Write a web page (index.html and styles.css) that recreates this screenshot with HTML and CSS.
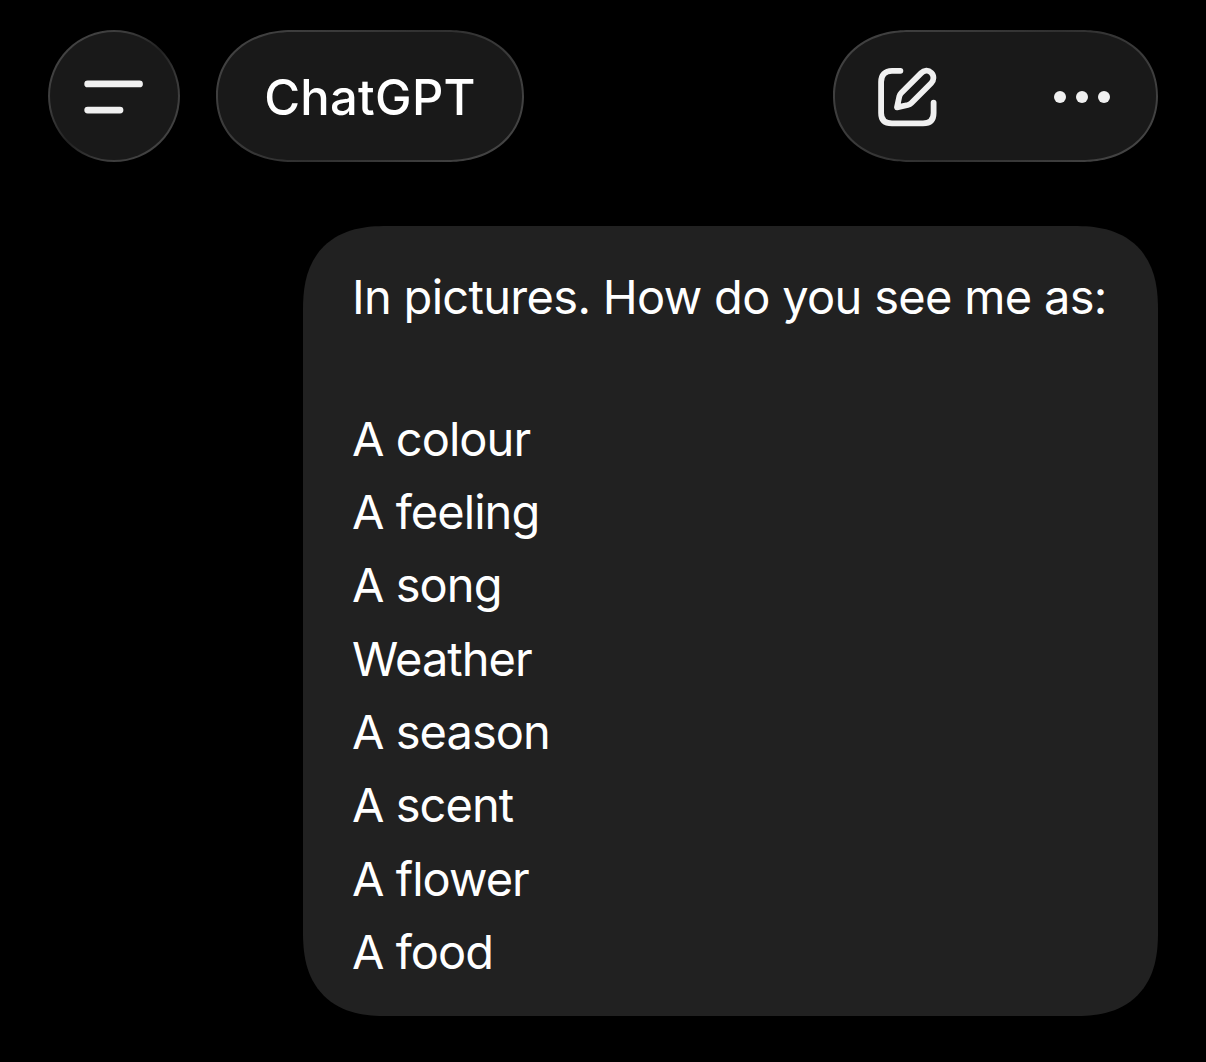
FILE: index.html
```html
<!DOCTYPE html>
<html lang="en">
<head>
    <meta charset="UTF-8">
    <meta name="viewport" content="width=device-width, initial-scale=1.0">
    <title>ChatGPT</title>
    <link rel="stylesheet" href="styles.css">
</head>
<body>
    <header class="top-bar">
        <button class="glass menu-button" aria-label="Menu">
            <svg width="60" height="36" viewBox="0 0 60 36" fill="none" stroke="#f0f0f0" stroke-width="6.8" stroke-linecap="round">
                <path d="M3.7 4.9H55.5M3.7 31.1H36"/>
            </svg>
        </button>
        <button class="glass title-button"><span>ChatGPT</span></button>
        <div class="glass actions">
            <button class="icon-button" aria-label="New chat">
                <svg width="60" height="60" viewBox="0 0 60 60" fill="none" stroke="#f0f0f0" stroke-width="5.8" stroke-linecap="round" stroke-linejoin="round">
                    <path d="M23.4 3.8H15C8 3.8 4.1 8 4.1 15V46C4.1 53 8 56.4 15 56.4H46C53 56.4 56.6 53 56.6 46V35.6"/>
                    <path d="M20 40.3L22.3 29.5Q22.8 27.4 24.2 26L44.1 6.1C47.1 3.1 51.4 2.8 54.3 5.7S57.1 13.3 54.1 16.3L34.4 36Q32.9 37.5 30.8 38Z"/>
                </svg>
            </button>
            <button class="icon-button" aria-label="More">
                <svg width="56" height="12" viewBox="0 0 56 12" fill="#f0f0f0">
                    <circle cx="6" cy="6" r="6"/>
                    <circle cx="28" cy="6" r="6"/>
                    <circle cx="50" cy="6" r="6"/>
                </svg>
            </button>
        </div>
    </header>

    <main class="chat">
        <div class="message">
            <p class="intro">In pictures. How do you see me as:</p>
            <ul class="prompts">
                <li>A colour</li>
                <li>A feeling</li>
                <li>A song</li>
                <li>Weather</li>
                <li>A season</li>
                <li>A scent</li>
                <li>A flower</li>
                <li>A food</li>
            </ul>
        </div>
    </main>
</body>
</html>
```
FILE: styles.css
```css
* { box-sizing: border-box; }
body {
    margin: 0;
    min-height: 1062px;
    background: #000;
    color: #fff;
    font-family: Inter, "Liberation Sans", sans-serif;
}
button {
    padding: 0;
    border: none;
    background: none;
    color: inherit;
    font-family: inherit;
}
.top-bar {
    display: flex;
    padding: 30px 48px 0;
}
/* dark fill with a rim that is brighter top left and bottom right */
.glass {
    display: flex;
    align-items: center;
    height: 132px;
    padding-top: 2px;
    border: 2px solid transparent;
    border-radius: 76px / 66px;
    corner-shape: superellipse(1.1);
    background:
        linear-gradient(#191919, #191919) padding-box,
        linear-gradient(135deg, #444 0%, #393939 30%, #303030 50%, #393939 70%, #484848 100%) border-box;
}
.menu-button {
    width: 132px;
    border-radius: 50%;
    corner-shape: round;
    justify-content: center;
    background:
        linear-gradient(#191919, #191919) padding-box,
        linear-gradient(135deg, #484848 0%, #3c3c3c 30%, #222 50%, #3c3c3c 70%, #484848 100%) border-box;
}
.title-button {
    width: 308px;
    margin-left: 36px;
    justify-content: center;
    font-size: 48.9px;
    font-weight: 500;
    letter-spacing: 0.3px;
}
.actions {
    width: 325px;
    margin-left: auto;
    padding: 2px 46px 0 42px;
    justify-content: space-between;
}
.icon-button { display: flex; }
.chat {
    display: flex;
    justify-content: flex-end;
    padding: 64px 48px 0;
}
.message {
    width: 855px;
    height: 790px;
    padding: 34px 49px;
    border-radius: 84px;
    corner-shape: superellipse(1.3);
    background: #212121;
    font-size: 47px;
    line-height: 73.3px;
    letter-spacing: -0.68px;
}
.intro { margin: 0 0 68.5px; white-space: nowrap; }
.prompts {
    margin: 0;
    padding: 0;
    list-style: none;
    letter-spacing: -0.95px;
}
```
